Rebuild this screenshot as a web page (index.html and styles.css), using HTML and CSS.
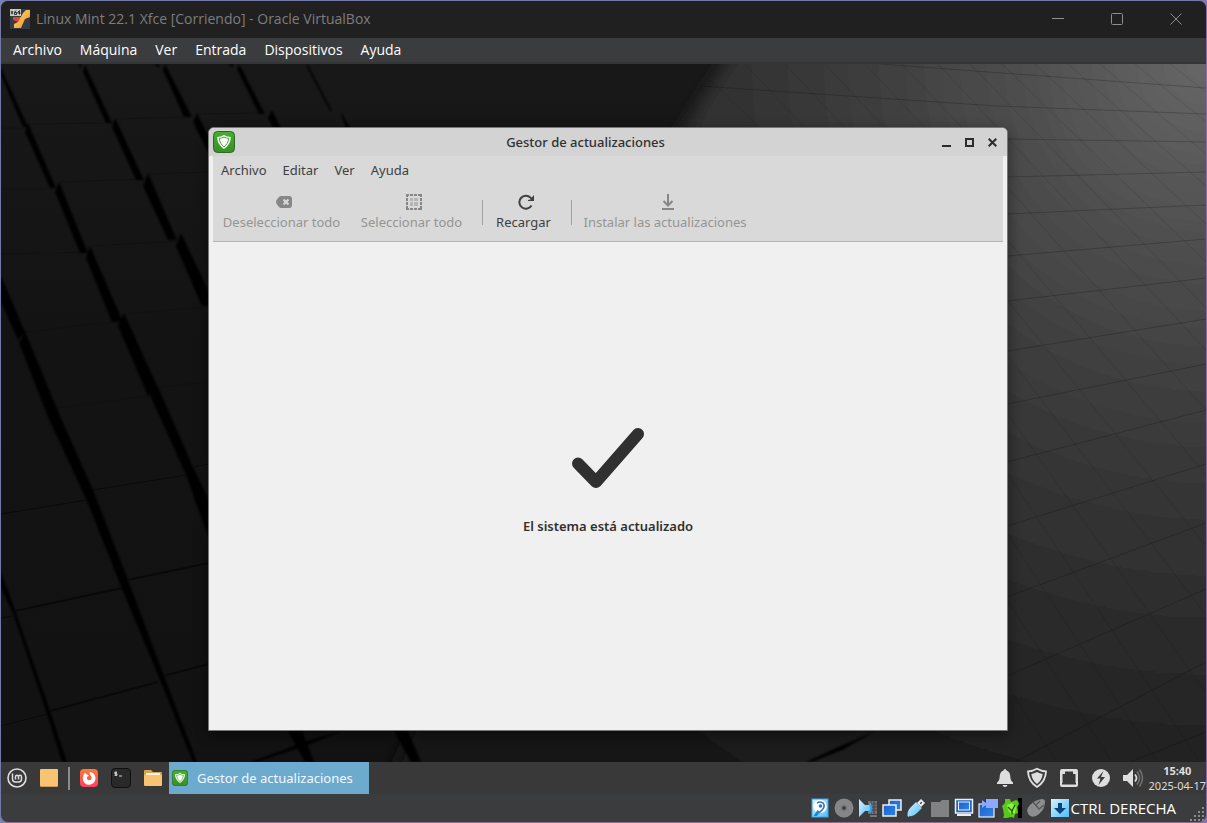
FILE: index.html
```
<!DOCTYPE html>
<html lang="es">
<head>
<meta charset="utf-8">
<title>Linux Mint 22.1 Xfce [Corriendo] - Oracle VirtualBox</title>
<link rel="stylesheet" href="styles.css">
</head>
<body>
<svg class="defs" aria-hidden="true">
  <defs>
    <linearGradient id="mint" x1="0" y1="0" x2="0" y2="1"><stop offset="0" stop-color="#43b02c"/><stop offset="1" stop-color="#3a8e28"/></linearGradient>
    <linearGradient id="sky" x1="0" y1="0" x2="1" y2="1"><stop offset="0" stop-color="#d8f3ff"/><stop offset="1" stop-color="#4dbdf8"/></linearGradient>
    <linearGradient id="blue" x1="0" y1="0" x2="1" y2="1"><stop offset="0" stop-color="#1a5fd0"/><stop offset="1" stop-color="#2f86e8"/></linearGradient>
    <linearGradient id="fire" x1="0" y1="0" x2="0" y2="1"><stop offset="0" stop-color="#ff7a33"/><stop offset="1" stop-color="#ff3d63"/></linearGradient>
    <linearGradient id="gold" x1="0" y1="0" x2="1" y2="1"><stop offset="0" stop-color="#ffe27a"/><stop offset="1" stop-color="#f08a1c"/></linearGradient>
    <symbol id="update" viewBox="0 0 22 22">
      <rect x=".5" y=".5" width="21" height="21" rx="4" fill="url(#mint)" stroke="#2c6b20"/>
      <path d="M11 4q3 1.800 6.800 2q0 7.500-6.800 12q-6.800-4.500-6.800-12q3.800-.2 6.800-2z" fill="#fff"/>
      <path d="M11 6q2.300 1.200 4.900 1.400q-.5 5.200-4.900 8.700q-4.400-3.500-4.900-8.700q2.600-.2 4.900-1.400z" fill="none" stroke="#4ba23a" stroke-width="1"/>
    </symbol>
  </defs>
</svg>
<div class="vm">
  <header class="vm-title">
    <svg class="vm-logo" viewBox="0 0 20 20" aria-hidden="true">
      <rect width="20" height="20" fill="#333a48"/>
      <path d="M3 8h8v3l-3 2-5-2z" fill="#e0481c"/>
      <path d="M20 1v7l-5 2-4 9H4v-4l4-2 5-9 3-3z" fill="url(#gold)"/>
      <rect width="11" height="7" fill="#c9c9c9"/>
      <path d="M1 2l2 3m0-3L1 5M6 1.500L4.500 3.500v2h2v-2h-2M9.500 5.500v-4l-2 2.500h3" fill="none" stroke="#222" stroke-width=".9"/>
    </svg>
    <h1 class="vm-name">Linux Mint 22.1 Xfce [Corriendo] - Oracle VirtualBox</h1>
    <div class="vm-controls">
      <button type="button" aria-label="Minimizar"><svg viewBox="0 0 12 12"><path d="M0 5.500h12"/></svg></button>
      <button type="button" aria-label="Maximizar"><svg viewBox="0 0 12 12"><rect x=".5" y=".5" width="11" height="11" rx="1"/></svg></button>
      <button type="button" aria-label="Cerrar"><svg viewBox="0 0 12 12"><path d="M.5.5l11 11M11.500.5l-11 11"/></svg></button>
    </div>
  </header>
  <nav class="vm-menu" aria-label="VirtualBox">
    <button type="button">Archivo</button><button type="button">Máquina</button><button type="button">Ver</button><button type="button">Entrada</button><button type="button">Dispositivos</button><button type="button">Ayuda</button>
  </nav>

  <main class="desktop">
    <svg class="wallpaper" viewBox="1 64 1205 698" preserveAspectRatio="none" aria-hidden="true">
      <defs>
        <linearGradient id="base" x1="0" y1="0" x2="0" y2="1"><stop offset="0" stop-color="#181818"/><stop offset=".4" stop-color="#131313"/><stop offset="1" stop-color="#121212"/></linearGradient>
        <radialGradient id="light" gradientUnits="userSpaceOnUse" cx="1206" cy="64" r="1000">
          <stop offset="0" stop-color="#676767"/><stop offset=".17" stop-color="#505050"/><stop offset=".34" stop-color="#3d3d3d"/><stop offset=".46" stop-color="#333"/><stop offset=".63" stop-color="#272727"/><stop offset=".75" stop-color="#1d1d1d"/><stop offset="1" stop-color="#131313"/>
        </radialGradient>
        <filter id="soft" x="-10%" y="-10%" width="120%" height="120%"><feGaussianBlur stdDeviation="8"/></filter>
        <filter id="edge"><feGaussianBlur stdDeviation=".8"/></filter>
      </defs>
      <rect x="1" y="64" width="1205" height="698" fill="url(#base)"/>
      <path d="M740 40L676 140L380 800H1260V40z" fill="url(#light)" filter="url(#soft)"/>
      <g fill="#060606" filter="url(#edge)">
        <path d="M1 68v7l22 52h5zM28 123l-3 9 25 56h6zM59 182l-4 10 25 61h8zM90 246l-4 12 26 64h11zM124 313l-6 13 30 70 10-8zM158 387l-8 8 37 82 22 62v-39l-16-33z"/>
        <path d="M85 65l-2 7 23 51h6zM115 118l-3 9 24 53h8zM148 173l-5 13 25 54h9zM181 233l-5 13 26 60h7v-14z"/>
        <path d="M165 64l-2 6 21 47h8zM197 113l-4 9 16 32v-16zM239 64l-2 5 22 45h6zM272 110l-4 8 5 10h8zM306 65l24 46h2l-24-46zM340 110l6 18h4zM78 64l3 5v-5zM154 64l5 4v-4zM228 64l5 4v-4z"/>
        <path d="M1 276v26l17 38 7-8zM25 331l-6 12 29 74 39 84 35 88 38 91 33 82h4l-33-86-36-96-35-90-36-81z"/>
        <path d="M1 572v16l12 25 34 101 15 48h5l-17-51-35-101z"/>
        <path d="M288 731h14l12 31h-9zM394 731h14l13 31h-10zM250 762l50-18 3-2 42-12-40 16-48 16zM806 762l30-14 40-17-34 19-30 12z"/>
      </g>
      <g fill="none" stroke="#070707">
        <path d="M1 514l86-14M92 490l95-15M194 467l15-3M1 726l46-12M1 618l12-2" stroke-width="1" stroke-opacity=".8"/>
        <path d="M15 611l107-23M127 580l82-17M50 711l108-29M163 676l46-12" stroke-width="2" stroke-opacity=".8"/>
        <path d="M28 124l84-1M115 119l76-2M197 114l68-1M1 128h24M1 189h54M59 182l85-3M148 174l60-2M1 254l87-2M91 246l86-5M25 332l97-11M57 408l100-13M158 387l51-5M124 314l85-7" stroke-opacity=".25"/>
      </g>
      <g fill="none" stroke="#000" stroke-opacity=".2">
        <path d="M880 64l326 24M700 86l297 20 209 8M1007 139l199 3M1007 177l199-5M1007 214l199-9M1007 256l199-17M1007 301l199-23M1007 351l199-32M1007 404l199-40M1007 462l199-52M1007 526l199-62M1007 597l199-74M1007 676l199-87M1015 762l191-100M1130 762l76-30"/>
      </g>
      <g fill="none" stroke="#000" stroke-opacity=".1">
        <path d="M710 80l50 48M745 64l60 64M785 64l60 64M825 64l60 64M865 64l60 64M902 64l60 64M938 64l268 286M970 64l236 244M1002 64l204 198M1035 64l171 160M1068 64l138 122M1100 64l106 90M1135 64l71 58M1170 64l36 28M1007 187l199 223M1007 240l199 235M1007 300l199 246M1007 355l199 260M1007 413l199 280M1007 473l193 289M1007 533l150 229M1007 600l105 162M1007 685l50 77"/>
      </g>
    </svg>

    <section class="window" aria-label="Gestor de actualizaciones">
      <header class="win-title">
        <svg class="win-icon" aria-hidden="true"><use href="#update"/></svg>
        <h2 class="win-name">Gestor de actualizaciones</h2>
        <div class="win-controls">
          <button type="button" aria-label="Minimizar"><svg viewBox="0 0 9 9"><path d="M0 8h9"/></svg></button>
          <button type="button" aria-label="Maximizar"><svg viewBox="0 0 9 9"><rect x="1" y="1" width="7" height="7"/></svg></button>
          <button type="button" aria-label="Cerrar"><svg viewBox="0 0 9 9"><path d="M.7.7l7.600 7.600M8.300.7L.7 8.300"/></svg></button>
        </div>
      </header>
      <div class="win-body">
        <nav class="win-menu" aria-label="Menú">
          <button type="button">Archivo</button><button type="button">Editar</button><button type="button">Ver</button><button type="button">Ayuda</button>
        </nav>
        <div class="toolbar">
          <button type="button" class="tool tool-clear" disabled>
            <svg viewBox="0 0 16 16" fill="#868686"><path d="M5 2h8q3 0 3 3v6q0 3-3 3H5q-1 0-2-1Q0 10 0 8t3-5q1-1 2-1z"/><path d="M7.500 5.500l5 5M12.500 5.500l-5 5" stroke="#d9d9d9" stroke-width="2"/></svg>
            Deseleccionar todo
          </button>
          <button type="button" class="tool tool-all" disabled>
            <svg viewBox="0 0 16 16" fill="#868686"><path d="M0 0h3v2H2v1H0zM4 0h3v2H4zM8 0h3v2H8zM12 0h4v3h-2V2h-2zM0 4h2v3H0zM0 8h2v3H0zM0 12h2v2h1v2H0zM4 14h3v2H4zM8 14h3v2H8zM12 14h2v-2h2v4h-4zM14 4h2v3h-2zM14 8h2v3h-2z"/><path d="M4 4h3v3H4zM8 4h4v3H8zM4 8h3v4H4zM8 8h4v4H8z" fill="#b5b5b5"/></svg>
            Seleccionar todo
          </button>
          <span class="tool-sep"></span>
          <button type="button" class="tool tool-reload">
            <svg viewBox="0 0 16 16"><path d="M13.500 11.500A6.500 6.500 0 1 1 12.500 3.600L14 5.500" fill="none" stroke="#404040" stroke-width="2"/><path d="M16 1v6h-6V6l2.500-.5L15 2z" fill="#404040"/></svg>
            Recargar
          </button>
          <span class="tool-sep"></span>
          <button type="button" class="tool tool-install" disabled>
            <svg viewBox="0 0 16 16" fill="none" stroke="#868686" stroke-width="2"><path d="M8 0v12M3.500 7L8 11.500 12.500 7M2 15h12"/></svg>
            Instalar las actualizaciones
          </button>
        </div>
        <div class="status-page">
          <svg class="check" viewBox="0 0 72 60" aria-hidden="true"><path d="M6 35.500L24 54 66 6" fill="none" stroke="#303030" stroke-width="12" stroke-linecap="round" stroke-linejoin="round"/></svg>
          <p class="status-text">El sistema está actualizado</p>
        </div>
      </div>
    </section>
  </main>

  <footer class="panel">
    <button type="button" class="launcher" aria-label="Menú de Mint"><svg viewBox="0 0 20 20" fill="none" stroke="#dedede"><circle cx="10" cy="10" r="9" stroke-width="1.600"/><path d="M5.500 5.500V11q0 3 3 3h3q3 0 3-3V9q0-1.700-1.500-1.700T11.500 9v2.500M11.500 9q0-1.700-1.500-1.700T8.500 9v2.500" stroke-width="1.500"/></svg></button>
    <button type="button" class="launcher" aria-label="Mostrar el escritorio"><svg viewBox="0 0 20 20"><rect x="1" y="2" width="18" height="17" rx="1" fill="#ce9a55"/><rect x="1" y="1" width="18" height="17" rx="1" fill="#f8c471"/></svg></button>
    <span class="panel-sep"></span>
    <button type="button" class="launcher" aria-label="Navegador"><svg viewBox="0 0 20 20"><rect x="1" y="1" width="18" height="18" rx="4" fill="url(#fire)"/><path d="M6 4.500q.5 1.500 2 2l2 1-2 1.500q-.5 3 2 3.200 2.800-.2 2.500-3L10.500 5l.5-1q5.500 1 5.500 6.500A6.400 6.400 0 0 1 10 16.800 6.300 6.300 0 0 1 3.800 10.500q0-3.500 2.200-6z" fill="#fff"/></svg></button>
    <button type="button" class="launcher" aria-label="Terminal"><svg viewBox="0 0 20 20"><rect x=".5" y=".5" width="19" height="19" rx="3.500" fill="#292929" stroke="#101010"/><path d="M6 4.200H3.800v1.500H6v1.600H3.500M4.900 3.500V8M8 8h3" fill="none" stroke="#e4e4e4" stroke-width=".9"/></svg></button>
    <button type="button" class="launcher" aria-label="Archivos"><svg viewBox="0 0 20 20"><path d="M1 3q0-1 1-1h6l2 2h8q1 0 1 1v5H1z" fill="#dba452"/><path d="M3 5h14v3H3z" fill="#fff4df"/><path d="M1 7h18v10q0 1-1 1H2q-1 0-1-1z" fill="#f8c471"/></svg></button>
    <button type="button" class="task"><svg aria-hidden="true"><use href="#update"/></svg>Gestor de actualizaciones</button>
    <div class="tray">
      <button type="button" aria-label="Notificaciones"><svg viewBox="0 0 24 24" fill="#dedede"><path d="M12 3q1.400 0 1.500 1.500Q17 5.500 17.300 10.500q.2 4.500 2.700 6v1.500H4v-1.500q2.500-1.500 2.700-6Q7 5.500 10.500 4.500 10.600 3 12 3zM9.500 19h5q-.5 2-2.500 2t-2.500-2z"/></svg></button>
      <button type="button" aria-label="Actualizaciones"><svg viewBox="0 0 24 24"><path d="M12 2.700q4.200 2.500 9 2.700-.3 10-9 15.600Q3.300 15.400 3 5.400q4.800-.2 9-2.700z" fill="none" stroke="#dedede" stroke-width="1.800"/><path d="M12 6q2.700 1.600 5.700 2-.6 6-5.700 10-5.100-4-5.700-10 3-.4 5.700-2z" fill="#dedede"/></svg></button>
      <button type="button" aria-label="Red"><svg viewBox="0 0 24 24"><path d="M5 3h14q2 0 2 2v14q0 2-2 2H5q-2 0-2-2V5q0-2 2-2zm3 2.500V8H5.500v8.500q0 .5-.5.5v1.500h14V17q-.5 0-.5-.5V8H16V5.500z" fill="#dedede" fill-rule="evenodd"/></svg></button>
      <button type="button" aria-label="Energía"><svg viewBox="0 0 24 24"><circle cx="12" cy="12" r="9" fill="#dedede"/><path d="M14.500 5L8 12.500h3.500L9.500 19l6.500-8h-4z" fill="#393939"/></svg></button>
      <button type="button" aria-label="Volumen"><svg viewBox="0 0 24 24"><path d="M2 9h4l6-6v18l-6-6H2z" fill="#dedede"/><path d="M14 8.500q3 3.500 0 7" fill="none" stroke="#dedede" stroke-width="1.700"/><path d="M16 5.500q5 6.500 0 13M18.500 3.500q6 8.500 0 17" fill="none" stroke="#737373" stroke-width="1.500"/></svg></button>
    </div>
    <div class="clock"><strong>15:40</strong><span>2025-04-17</span></div>
  </footer>

  <footer class="vm-status">
    <div class="devices">
      <svg viewBox="0 0 20 20"><rect x="2" y="1" width="16" height="18" fill="url(#sky)" stroke="#38a5ec"/><circle cx="10" cy="8.500" r="6.800" fill="#fff"/><path d="M7 5q3-2 6 0 2.500 3-.5 6.500L9 15" fill="none" stroke="#3478b9" stroke-width="1.600"/><circle cx="10.500" cy="8" r="1.800" fill="#3478b9"/><path d="M3.500 18l4-6 2.500 2-3 4z" fill="#1d86d8"/></svg>
      <svg viewBox="0 0 20 20"><circle cx="10" cy="10" r="9.500" fill="#858686"/><circle cx="10" cy="10" r="3.300" fill="#777"/><circle cx="10" cy="10" r="1.800" fill="#3a3b3d"/></svg>
      <svg viewBox="0 0 20 20"><path d="M10 3h9v13h-9z" fill="#707274"/><path d="M13 3v16M10 6h9M10 9h9M10 12h9M16 3v16" stroke="#45474a"/><path d="M12 18h7" stroke="#777" stroke-width="2"/><path d="M1 1l6 6h5v6H7l-6 6z" fill="url(#sky)"/><path d="M12 5q2 5 0 10" stroke="#34a5ee" stroke-width="2" fill="none"/></svg>
      <svg viewBox="0 0 20 20"><rect x="7" y="2" width="12" height="10" fill="url(#blue)" stroke="#eee" stroke-width="1.500"/><rect x="1" y="7" width="13" height="11" fill="url(#blue)" stroke="#eee" stroke-width="1.500"/></svg>
      <svg viewBox="0 0 20 20"><path d="M11 5l4-4 4 4-4 4z" fill="#ececec" stroke="#999"/><path d="M1.500 17.500Q1 13 5 9l5-5 6 6-5 5q-4 4-7 3l-2 1z" fill="url(#sky)"/><path d="M14.500 4.500l1 1" stroke="#333" stroke-width="2"/></svg>
      <svg viewBox="0 0 20 20"><path d="M1 4h9l2-2h7v17H1z" fill="#818282"/></svg>
      <svg viewBox="0 0 20 20"><rect x="1.500" y="1.500" width="17" height="13.500" fill="#1b65cd" stroke="#eee" stroke-width="1.500"/><rect x="4.500" y="4" width="11" height="8" fill="url(#blue)" stroke="#eee"/><path d="M3 18h14v-2H3z" fill="#eee"/></svg>
      <svg viewBox="0 0 20 20"><rect x="1" y="6" width="15" height="13" fill="url(#blue)" stroke="#eee" stroke-width="1.200"/><path d="M4 2l4 3V1h12v9H8V7l-4 3z" fill="#8fa8ff"/></svg>
      <svg viewBox="0 0 20 20"><path d="M16 0h4v20h-4z" fill="#000"/><path d="M3 1h5l1 3 5-2 2 1 1 3-2 3 1 6-3 1-1 4-3-1-4 1-4 1 1-4-1-6-1-3 3-3z" fill="#58c91c"/><path d="M5 7l5-2 4 4-1 6-4 1-3-4z" fill="#91f043"/><path d="M6 9l4 4 3-6M10 13v3" fill="none" stroke="#265d10" stroke-width="1.400"/></svg>
      <svg viewBox="0 0 20 20"><path d="M3 17q-4-5 1-10T16 1q3 0 3 3 0 7-6 12t-10 1z" fill="#8c8d8e"/><path d="M7 4l6 7 5-4M10 7l4-4" fill="none" stroke="#55585a" stroke-width="1.300"/></svg>
      <svg viewBox="0 0 20 20"><rect x="1" y="1" width="18" height="18" fill="url(#sky)"/><path d="M8 5h4v5h4l-6 6-6-6h4z" fill="#0b447d"/></svg>
    </div>
    <span class="host-key">CTRL DERECHA</span>
    <svg class="grip" viewBox="0 0 16 16" fill="#8a8b8c" aria-hidden="true"><path d="M12 1h2v2h-2zM8 5h2v2H8zM12 5h2v2h-2zM4 9h2v2H4zM8 9h2v2H8zM12 9h2v2h-2zM0 13h2v2H0zM4 13h2v2H4zM8 13h2v2H8zM12 13h2v2h-2z"/></svg>
  </footer>
</div>
</body>
</html>
```
FILE: styles.css
```
* { box-sizing: border-box; }

body {
  margin: 0;
  background: linear-gradient(90deg, #7585b5, #8d72b8);
  font-family: "Open Sans", "Noto Sans", sans-serif;
}

h1, h2, p { margin: 0; font-weight: 400; }

button {
  margin: 0;
  padding: 0;
  border: 0;
  background: none;
  color: inherit;
  font: inherit;
}

svg { display: block; }
.defs { position: absolute; width: 0; height: 0; }

.vm {
  display: flex;
  flex-direction: column;
  height: 100vh;
  border: 1px solid #7479a8;
  border-right-color: #8a6aa8;
  border-bottom-color: #8d6f8d;
  border-radius: 8px;
  overflow: hidden;
  background: #3b3c3e;
}

/* Host window */
.vm-title {
  display: flex;
  align-items: center;
  flex: 0 0 37px;
  padding: 0 1px 1px 9px;
  background: #202020;
  color: #7d7d7d;
}
.vm-logo { width: 20px; height: 20px; margin-right: 6px; }
.vm-name { flex: 1; font-size: 14px; line-height: 20px; }
.vm-controls { display: flex; }
.vm-controls button { display: grid; place-items: center; width: 59px; height: 36px; }
.vm-controls svg { width: 12px; height: 12px; fill: none; stroke: #8e8e8e; }

.vm-menu {
  display: flex;
  flex: 0 0 26px;
  padding-left: 3px;
  border-bottom: 2px solid #343536;
  background: #3b3c3e;
  color: #fff;
  font-size: 14px;
  line-height: 24px;
}
.vm-menu button { padding: 0 9px; }

/* Guest desktop */
.desktop { position: relative; flex: 1; min-height: 0; }
.wallpaper { position: absolute; inset: 0; width: 100%; height: 100%; }

.window {
  position: absolute;
  inset: 63px 198px 31px 207px;
  display: flex;
  flex-direction: column;
  border: 1px solid #777;
  border-radius: 6px 6px 0 0;
  overflow: hidden;
  background: #f0f0f0;
  box-shadow: 0 4px 14px rgba(0, 0, 0, .45);
  font-family: "Noto Sans", sans-serif;
  font-size: 13px;
}
.win-title {
  display: grid;
  grid-template-columns: 26px 1fr 72px;
  align-items: center;
  flex: 0 0 28px;
  padding: 0 3px 0 4px;
  background: #d3d3d3;
  color: #303030;
}
.win-icon { width: 22px; height: 22px; }
.win-name { font-size: 13px; font-weight: 500; line-height: 20px; text-align: center; }
.win-controls { display: flex; justify-content: flex-end; }
.win-controls button { display: grid; place-items: center; width: 23px; height: 24px; }
.win-controls svg { width: 9px; height: 9px; fill: none; stroke: #2c2c2c; stroke-width: 2; }

.win-body { display: flex; flex-direction: column; flex: 1; padding: 0 4px 4px; }
.win-menu {
  display: flex;
  flex: 0 0 28px;
  background: #d9d9d9;
  color: #404040;
}
.win-menu button { padding: 0 8px; }

.toolbar {
  display: flex;
  align-items: center;
  flex: 0 0 58px;
  border-bottom: 1px solid #b5b5b5;
  background: #d9d9d9;
}
.tool {
  display: flex;
  flex-direction: column;
  align-items: center;
  gap: 3px;
  line-height: 18px;
  white-space: nowrap;
  color: #404040;
}
.tool:disabled { color: #959595; }
.tool svg { width: 21px; height: 16px; padding-left: 5px; }
.tool-clear { width: 137px; }
.tool-all { width: 123px; }
.tool-reload { width: 77px; }
.tool-install { width: 182px; }
.tool-sep { width: 1px; height: 25px; margin: 0 2px 0 9px; background: #a3a3a3; }

.status-page {
  display: flex;
  flex: 1;
  flex-direction: column;
  align-items: center;
  justify-content: center;
  gap: 28px;
  padding-bottom: 4px;
}
.check { width: 72px; height: 60px; }
.status-text { color: #303030; font-weight: 600; line-height: 20px; }

/* Guest panel */
.panel {
  display: flex;
  align-items: center;
  flex: 0 0 32px;
  background: #393939;
  color: #dedede;
  font-family: "Noto Sans", sans-serif;
}
.launcher { display: grid; place-items: center; width: 32px; height: 32px; }
.launcher svg { width: 20px; height: 20px; }
.panel-sep { width: 2px; height: 23px; margin: 0 3px; background: #8b8b8b; }
.task {
  display: flex;
  align-items: center;
  gap: 9px;
  width: 200px;
  height: 32px;
  padding-left: 3px;
  background: #6caace;
  color: #f4f8fb;
  font-size: 13px;
}
.task svg { width: 16px; height: 16px; }
.tray { display: flex; gap: 8px; margin-left: auto; }
.tray svg { width: 24px; height: 24px; }
.clock {
  display: flex;
  flex-direction: column;
  align-items: center;
  margin: 0 0 0 4px;
  font-size: 11px;
  line-height: 15px;
}

/* Host status bar */
.vm-status {
  display: flex;
  align-items: center;
  justify-content: flex-end;
  flex: 0 0 28px;
  color: #fff;
}
.devices { display: flex; gap: 4px; }
.devices svg { width: 20px; height: 20px; }
.host-key { margin: 0 14px 0 1px; font-size: 15px; line-height: 20px; }
.grip { width: 16px; height: 16px; align-self: flex-end; }
```
